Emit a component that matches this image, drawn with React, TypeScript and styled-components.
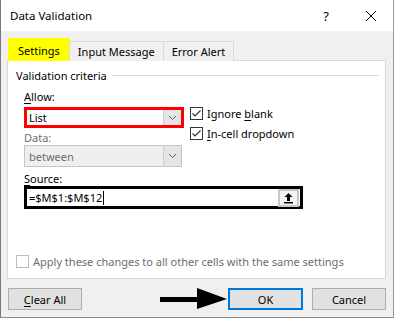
import React from 'react'
import styled, { createGlobalStyle } from 'styled-components'

const GlobalStyle = createGlobalStyle`
  html, body {
    margin: 0;
    padding: 0;
    background: #ffffff;
  }
  body {
    font-family: "Noto Sans", "Open Sans", Arial, sans-serif;
    font-size: 11px;
    color: #000;
  }
`

const Window = styled.div`
  box-sizing: border-box;
  width: 394px;
  height: 318px;
  border-left: 1px solid #7a7a7a;
  border-right: 1px solid #9a9a9a;
  border-bottom: 1px solid #8a8a8a;
  background: #f0f0f0;
  display: flex;
  flex-direction: column;
  overflow: hidden;
`

const TitleBar = styled.div`
  height: 31px;
  background: #ffffff;
  display: flex;
  align-items: center;
  padding-left: 9px;
  flex-shrink: 0;
`

const Title = styled.span`
  flex: 1;
  font-size: 11.5px;
`

const Help = styled.span`
  width: 20px;
  text-align: center;
  font-size: 13px;
  margin-right: 29px;
`

const Close = styled.span`
  width: 12px;
  height: 12px;
  margin-right: 16px;
  display: flex;
`

const Body = styled.div`
  flex: 1;
  display: flex;
  flex-direction: column;
  padding: 7px 7px 0 6px;
`

const TabRow = styled.div`
  display: flex;
  align-items: flex-end;
  height: 23px;
  padding-left: 1px;
  position: relative;
  z-index: 1;
  margin-bottom: -1px;
`

const Tab = styled.div<{ $active?: boolean }>`
  box-sizing: border-box;
  height: ${p => (p.$active ? '23px' : '20px')};
  padding: 0 ${p => (p.$active ? '9px' : '8px')};
  display: flex;
  align-items: center;
  background: ${p => (p.$active ? '#ffff00' : '#f0f0f0')};
  border: 1px solid ${p => (p.$active ? '#ffff00' : '#d9d9d9')};
  border-bottom: none;
  margin-left: ${p => (p.$active ? '0' : '-1px')};
  white-space: nowrap;
`

const Panel = styled.div`
  box-sizing: border-box;
  height: 219px;
  background: #ffffff;
  border: 1px solid #d9d9d9;
  display: flex;
  flex-direction: column;
  padding: 7px 6px 8px 8px;
`

const Legend = styled.div`
  display: flex;
  align-items: center;
  height: 14px;
  & span {
    white-space: nowrap;
  }
  &::after {
    content: '';
    flex: 1;
    height: 1px;
    background: #dcdcdc;
    margin-left: 5px;
  }
`

const Criteria = styled.div`
  display: grid;
  grid-template-columns: 160px auto;
  column-gap: 6px;
  padding-left: 8px;
  margin-top: 7px;
`

const SourceSection = styled.div`
  display: flex;
  flex-direction: column;
  padding-left: 8px;
  margin-top: 4px;
`

const LeftCol = styled.div`
  display: flex;
  flex-direction: column;
`

const RightCol = styled.div`
  display: flex;
  flex-direction: column;
  gap: 7px;
  padding-top: 18px;
`

const Label = styled.div<{ $disabled?: boolean; $gap?: number }>`
  height: 15px;
  line-height: 15px;
  margin-top: ${p => p.$gap ?? 0}px;
  color: ${p => (p.$disabled ? '#6d6d6d' : '#000')};
  & u {
    text-decoration-thickness: 1px;
    text-underline-offset: 2px;
  }
`

const Combo = styled.div<{ $disabled?: boolean; $highlight?: boolean; $width: number; $gap: number }>`
  box-sizing: border-box;
  width: ${p => p.$width}px;
  height: ${p => (p.$highlight ? 21 : 22)}px;
  margin-top: ${p => p.$gap}px;
  display: flex;
  align-items: stretch;
  background: ${p => (p.$disabled ? '#efefef' : '#ffffff')};
  border: ${p => (p.$highlight ? '3px solid #ff0000' : '1px solid #c6c6c6')};
  & span {
    flex: 1;
    display: flex;
    align-items: center;
    padding-left: ${p => (p.$highlight ? '2px' : '4px')};
    color: ${p => (p.$disabled ? '#6d6d6d' : '#000')};
  }
`

const ComboButton = styled.div`
  width: 17px;
  background: #e5e5e5;
  border-left: 1px solid #d0d0d0;
  display: flex;
  align-items: center;
  justify-content: center;
`

const SourceBox = styled.div`
  box-sizing: border-box;
  width: 279px;
  height: 23px;
  border: 3px solid #000;
  background: #fff;
  display: flex;
  align-items: center;
  padding: 0 1px 0 2px;
  & span {
    flex: 1;
    display: flex;
    align-items: center;
  }
  & i {
    display: inline-block;
    width: 1px;
    height: 14px;
    background: #000;
    margin-left: 1px;
  }
`

const RefButton = styled.div`
  box-sizing: border-box;
  width: 21px;
  height: 18px;
  background: #f4f4f4;
  border: 2px solid #c9c9c9;
  display: flex;
  align-items: center;
  justify-content: center;
`

const CheckRow = styled.div<{ $disabled?: boolean }>`
  display: flex;
  align-items: center;
  gap: 4px;
  height: 13px;
  white-space: nowrap;
  color: ${p => (p.$disabled ? '#6d6d6d' : '#000')};
  & u {
    text-underline-offset: 2px;
  }
`

const Box = styled.span<{ $disabled?: boolean }>`
  box-sizing: border-box;
  width: 13px;
  height: 13px;
  flex-shrink: 0;
  border: 1px solid ${p => (p.$disabled ? '#bcbcbc' : '#333333')};
  background: #fff;
  display: flex;
  align-items: center;
  justify-content: center;
`

const ApplyRow = styled(CheckRow)`
  margin-top: auto;
  height: 16px;
  padding-bottom: 1px;
`

const Footer = styled.div`
  display: flex;
  align-items: center;
  margin-top: 9px;
  padding-left: 1px;
`

const Button = styled.div<{ $default?: boolean; $width: number; $gap?: number }>`
  box-sizing: border-box;
  width: ${p => p.$width}px;
  height: 22px;
  margin-left: ${p => p.$gap ?? 0}px;
  background: #e1e1e1;
  border: ${p => (p.$default ? '2px solid #0078d7' : '1px solid #adadad')};
  display: flex;
  align-items: center;
  justify-content: center;
  & u {
    text-underline-offset: 2px;
  }
`

const Arrow = styled.svg`
  margin-left: auto;
  display: block;
`

const Check = () => (
  <svg width="11" height="11" viewBox="0 0 11 11">
    <polyline points="1.5,5.5 4,8 9.5,2.5" fill="none" stroke="#333" strokeWidth="1.2" />
  </svg>
)

const Chevron = () => (
  <svg width="9" height="6" viewBox="0 0 9 6">
    <polyline points="1,1 4.5,4.5 8,1" fill="none" stroke="#606060" strokeWidth="1" />
  </svg>
)

export default function App() {
  return (
    <>
      <GlobalStyle />
      <Window>
        <TitleBar>
          <Title>Data Validation</Title>
          <Help>?</Help>
          <Close>
            <svg width="12" height="12" viewBox="0 0 12 12">
              <path d="M1 1 L11 11 M11 1 L1 11" stroke="#000" strokeWidth="1" />
            </svg>
          </Close>
        </TitleBar>
        <Body>
          <TabRow>
            <Tab $active>Settings</Tab>
            <Tab>Input Message</Tab>
            <Tab>Error Alert</Tab>
          </TabRow>
          <Panel>
            <Legend>
              <span>Validation criteria</span>
            </Legend>
            <Criteria>
              <LeftCol>
                <Label><u>A</u>llow:</Label>
                <Combo $highlight $width={160} $gap={3}>
                  <span>List</span>
                  <ComboButton>
                    <Chevron />
                  </ComboButton>
                </Combo>
                <Label $disabled $gap={2}>Data:</Label>
                <Combo $disabled $width={158} $gap={0}>
                  <span>between</span>
                  <ComboButton>
                    <Chevron />
                  </ComboButton>
                </Combo>
              </LeftCol>
              <RightCol>
                <CheckRow>
                  <Box><Check /></Box>
                  <span>Ignore <u>b</u>lank</span>
                </CheckRow>
                <CheckRow>
                  <Box><Check /></Box>
                  <span><u>I</u>n-cell dropdown</span>
                </CheckRow>
              </RightCol>
            </Criteria>
            <SourceSection>
              <Label><u>S</u>ource:</Label>
              <SourceBox>
                <span>=$M$1:$M$12<i /></span>
                <RefButton>
                  <svg width="11" height="12" viewBox="0 0 11 12">
                    <path d="M5.5 1 L1.5 5 H4 V9 H7 V5 H9.5 Z" fill="#000" />
                    <rect x="1" y="10" width="9" height="1.5" fill="#000" />
                  </svg>
                </RefButton>
              </SourceBox>
            </SourceSection>
            <ApplyRow $disabled>
              <Box $disabled />
              <span>Apply these changes to all other cells with the same settings</span>
            </ApplyRow>
          </Panel>
          <Footer>
            <Button $width={74}><span><u>C</u>lear All</span></Button>
            <Arrow width="68" height="22" viewBox="0 0 68 22">
              <rect x="0" y="9" width="40" height="5" fill="#000" />
              <polygon points="37,0 67,11 37,21" fill="#000" />
            </Arrow>
            <Button $default $width={75}>OK</Button>
            <Button $width={74} $gap={9}>Cancel</Button>
          </Footer>
        </Body>
      </Window>
    </>
  )
}
